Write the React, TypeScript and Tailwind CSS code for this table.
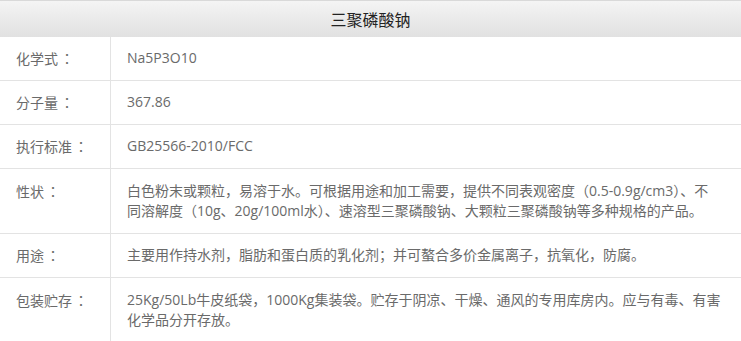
import React from "react";

interface Row {
  label: string;
  lines: string[];
}

const rows: Row[] = [
  { label: "化学式", lines: ["Na5P3O10"] },
  { label: "分子量", lines: ["367.86"] },
  { label: "执行标准", lines: ["GB25566-2010/FCC"] },
  {
    label: "性状",
    lines: [
      "白色粉末或颗粒，易溶于水。可根据用途和加工需要，提供不同表观密度（0.5-0.9g/cm3）、不",
      "同溶解度（10g、20g/100ml水）、速溶型三聚磷酸钠、大颗粒三聚磷酸钠等多种规格的产品。",
    ],
  },
  {
    label: "用途",
    lines: ["主要用作持水剂，脂肪和蛋白质的乳化剂；并可螯合多价金属离子，抗氧化，防腐。"],
  },
  {
    label: "包装贮存",
    lines: [
      "25Kg/50Lb牛皮纸袋，1000Kg集装袋。贮存于阴凉、干燥、通风的专用库房内。应与有毒、有害",
      "化学品分开存放。",
    ],
  },
];

export default function App() {
  return (
    <div className="w-[741px] bg-white font-['Open_Sans','Noto_Sans_CJK_SC',sans-serif]">
      {/* 标题栏 */}
      <div className="h-[37px] border-t border-[#d9d9d9] bg-gradient-to-b from-[#f4f4f4] to-[#e1e1e1] flex items-center justify-center">
        <span className="text-[16px] text-[#222] font-['Noto_Sans_CJK_SC',sans-serif]">
          三聚磷酸钠
        </span>
      </div>

      {rows.map((row) => {
        const pad = row.lines.length > 1 ? "py-3" : "py-[11px]";
        return (
          <div
            key={row.label}
            className="flex border-b border-[#e3e3e3] text-[14px] text-[#6a6a6a] leading-[20px]"
          >
            <div className={`w-[111px] shrink-0 border-r border-[#e3e3e3] pl-4 ${pad}`}>
              <span className="font-['Noto_Sans_CJK_SC',sans-serif]">{row.label}</span>
              <span className="font-['Noto_Sans_CJK_TC',sans-serif] ml-[2px]">：</span>
            </div>
            <div className={`flex-1 pl-4 pr-3 ${pad}`}>
              {row.lines.map((line, i) => (
                <div key={i} className="whitespace-nowrap">
                  {line}
                </div>
              ))}
            </div>
          </div>
        );
      })}
    </div>
  );
}
